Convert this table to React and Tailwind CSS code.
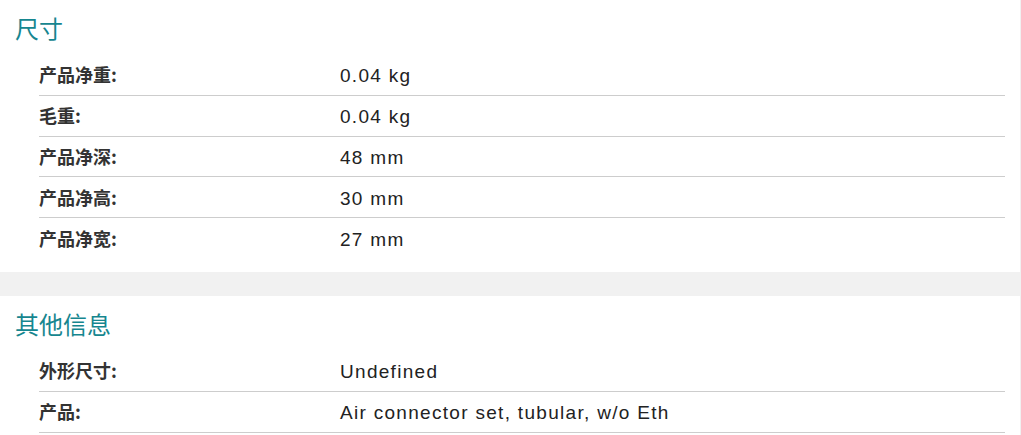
import React from 'react';

const sections = [
  {
    title: '尺寸',
    rows: [
      ['产品净重:', '0.04 kg'],
      ['毛重:', '0.04 kg'],
      ['产品净深:', '48 mm'],
      ['产品净高:', '30 mm'],
      ['产品净宽:', '27 mm'],
    ],
  },
  {
    title: '其他信息',
    rows: [
      ['外形尺寸:', 'Undefined'],
      ['产品:', 'Air connector set, tubular, w/o Eth'],
    ],
  },
];

const Section = ({ title, rows }) => (
  <section className="w-[1020px] bg-white pt-3 pb-[13px]">
    <h2 className="pl-[15px] text-[24px] leading-8 font-normal text-[#16868f] font-['Noto_Sans_CJK_SC',sans-serif]">
      {title}
    </h2>
    <div className="mt-[11px] ml-[39px] mr-[15px]">
      {rows.map(([label, value], i) => (
        <div
          key={label}
          className={`flex items-center h-[40.8px] ${i < rows.length - 1 || rows.length < 5 ? 'border-b border-[#cdcdcd]' : ''}`}
        >
          <div className="w-[301px] text-[18px] font-bold text-[#333] font-['Noto_Sans_CJK_SC',sans-serif]">
            {label}
          </div>
          <div className="pt-[3px] text-[19px] tracking-[1.3px] text-[#222] font-['Liberation_Sans',Arial,sans-serif]">
            {value}
          </div>
        </div>
      ))}
    </div>
  </section>
);

export default function App() {
  return (
    <div className="min-h-screen bg-[#f1f1f1]">
      <Section {...sections[0]} />
      <div className="h-6" />
      <Section {...sections[1]} />
    </div>
  );
}
